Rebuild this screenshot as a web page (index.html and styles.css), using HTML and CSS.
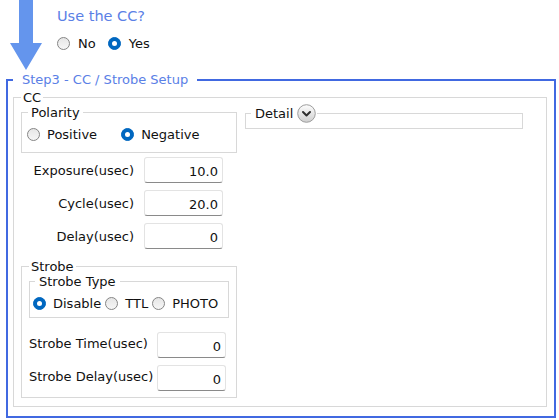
FILE: index.html
```html
<!DOCTYPE html>
<html>
<head>
<meta charset="utf-8">
<link rel="stylesheet" href="styles.css">
</head>
<body>
<div class="header">
  <svg class="arrow" width="32" height="72" viewBox="0 0 32 72"><polygon points="9,0 23,0 23,43 32,43 16,70 0,43 9,43" fill="#6495ed"/></svg>
  <div class="question">
    <div class="q-title">Use the CC?</div>
    <div class="radios q-radios">
      <span class="opt"><span class="radio"></span>No</span>
      <span class="opt"><span class="radio on"></span>Yes</span>
    </div>
  </div>
</div>
<fieldset class="step">
  <legend class="step-legend">Step3 - CC / Strobe Setup</legend>
  <fieldset class="box cc">
    <legend class="lg lg-cc">CC</legend>
    <div class="cc-body">
      <div class="cc-left">
        <fieldset class="box polarity">
          <legend class="lg lg-pol">Polarity</legend>
          <div class="radios pol-radios">
            <span class="opt"><span class="radio"></span>Positive</span>
            <span class="opt"><span class="radio on"></span>Negative</span>
          </div>
        </fieldset>
        <div class="rows">
          <span class="lbl">Exposure(usec)</span><input class="num" type="text" value="10.0" readonly>
          <span class="lbl">Cycle(usec)</span><input class="num" type="text" value="20.0" readonly>
          <span class="lbl">Delay(usec)</span><input class="num" type="text" value="0" readonly>
        </div>
        <fieldset class="box strobe">
          <legend class="lg lg-strobe">Strobe</legend>
          <fieldset class="box stype">
            <legend class="lg lg-stype">Strobe Type</legend>
            <div class="radios st-radios">
              <span class="opt"><span class="radio on"></span>Disable</span>
              <span class="opt"><span class="radio"></span>TTL</span>
              <span class="opt"><span class="radio"></span>PHOTO</span>
            </div>
          </fieldset>
          <div class="srows">
            <span class="slbl">Strobe Time(usec)</span><input class="num" type="text" value="0" readonly>
            <span class="slbl">Strobe Delay(usec)</span><input class="num" type="text" value="0" readonly>
          </div>
        </fieldset>
      </div>
      <fieldset class="box detail">
        <legend class="lg lg-detail"><span class="detail-head">Detail<svg class="toggle" width="19" height="19" viewBox="0 0 19 19"><defs><linearGradient id="tg" x1="0" y1="0" x2="0" y2="1"><stop offset="0" stop-color="#fdfdfd"/><stop offset="1" stop-color="#cfcfcf"/></linearGradient></defs><circle cx="9.5" cy="9.5" r="8.8" fill="url(#tg)" stroke="#9d9d9d" stroke-width="1"/><path d="M6 8 L9.5 11.5 L13 8" fill="none" stroke="#2f2f2f" stroke-width="2" stroke-linecap="round" stroke-linejoin="round"/></svg></span></legend>
      </fieldset>
    </div>
  </fieldset>
</fieldset>
</body>
</html>
```
FILE: styles.css
```css
html, body {
  margin: 0;
  padding: 0;
  background: #ffffff;
}
body {
  font-family: "DejaVu Sans", Verdana, sans-serif;
  font-size: 13px;
  color: #111111;
}
.header {
  display: flex;
  height: 72px;
}
.arrow {
  display: block;
  margin-left: 10px;
}
.question {
  margin-left: 15px;
  padding-top: 6px;
}
.q-title {
  font-size: 14.5px;
  line-height: 20px;
  color: #5a80e6;
}
.radios {
  display: flex;
  align-items: center;
  height: 20px;
}
.opt {
  display: flex;
  align-items: center;
}
.radio {
  box-sizing: border-box;
  width: 13px;
  height: 13px;
  border-radius: 50%;
  border: 1px solid #858585;
  background: linear-gradient(#e6e6e6, #f6f6f6);
  display: flex;
  align-items: center;
  justify-content: center;
  margin-right: 7px;
  flex: none;
}
.radio.on {
  background: #0067c0;
  border-color: #0067c0;
}
.radio.on::after {
  content: "";
  width: 5px;
  height: 5px;
  border-radius: 50%;
  background: #ffffff;
}
.q-radios {
  margin-top: 7px;
}
.q-radios .opt + .opt {
  margin-left: 12px;
}
.q-radios .radio {
  margin-right: 8px;
}
.step {
  margin: 0 3px 0 6px;
  min-width: 0;
  border: 2px solid #4169e1;
  padding: 2px 7px 9px 5px;
}
.step-legend {
  padding: 0 9px;
  line-height: 16px;
  color: #5a80e6;
}
.box {
  margin: 0;
  min-width: 0;
  border: 1px solid #d8d8d8;
}
.lg {
  line-height: 15px;
}
.cc {
  padding: 0 7px 8px 7px;
}
.lg-cc {
  padding: 0 2px;
}
.cc-body {
  display: flex;
  align-items: flex-start;
  gap: 8px;
}
.cc-left {
  width: 216px;
  display: flex;
  flex-direction: column;
}
.polarity {
  padding: 0 6px 8px 6px;
}
.lg-pol {
  padding: 0 3px;
}
.pol-radios {
  margin-top: 4px;
  margin-left: -1px;
}
.pol-radios .opt + .opt {
  margin-left: 24px;
}
.rows {
  display: grid;
  grid-template-columns: 113px 79px;
  column-gap: 10px;
  row-gap: 7px;
  align-items: center;
  margin-top: 4px;
}
.lbl {
  text-align: right;
}
.num {
  box-sizing: border-box;
  height: 26px;
  width: 100%;
  margin: 0;
  padding: 3px 4px 0 4px;
  font-family: "DejaVu Sans", Verdana, sans-serif;
  font-size: 13px;
  color: #111111;
  text-align: right;
  border: 1px solid #e3e3e3;
  border-bottom: 1px solid #8a8a8a;
  border-radius: 3px;
  background: #ffffff;
  outline: none;
}
.strobe {
  margin-top: 10px;
  padding: 0 7px 6px 7px;
}
.lg-strobe {
  padding: 0 2px;
}
.stype {
  padding: 0 4px 4px 3px;
}
.lg-stype {
  margin-left: 2px;
  padding: 0 4px;
}
.st-radios {
  margin-top: 4px;
}
.st-radios .opt + .opt {
  margin-left: 4px;
}
.srows {
  display: grid;
  grid-template-columns: 128px 69px;
  row-gap: 7px;
  align-items: center;
  margin-top: 14px;
}
.slbl {
  margin-bottom: 4px;
  white-space: nowrap;
}
.detail {
  width: 278px;
  box-sizing: border-box;
  padding: 0 5px 6px 5px;
}
.lg-detail {
  padding: 0 1px 0 4px;
}
.detail-head {
  display: flex;
  align-items: center;
  height: 17px;
}
.toggle {
  display: block;
  margin-left: 4px;
  flex: none;
}
```
